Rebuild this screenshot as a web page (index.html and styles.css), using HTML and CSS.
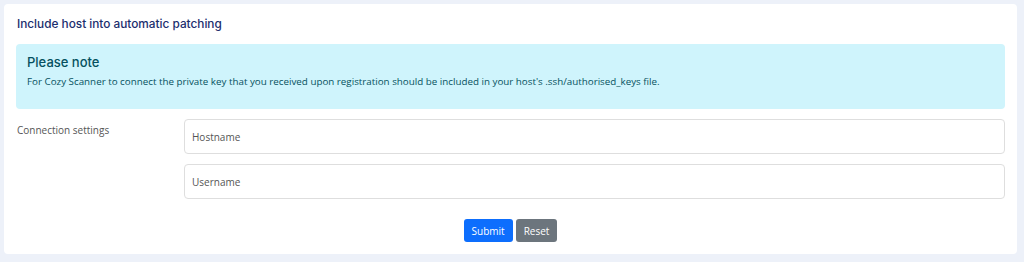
FILE: index.html
```html
<!DOCTYPE html>
<html lang="en">
<head>
  <meta charset="UTF-8" />
  <title>Include host into automatic patching</title>
  <link rel="stylesheet" href="styles.css">
</head>
<body>
  <div class="card">
    <h3 class="card-title">Include host into automatic patching</h3>

    <div class="alert">
      <h4>Please note</h4>
      <p>For Cozy Scanner to connect the private key that you received upon registration should be included in your host's .ssh/authorised_keys file.</p>
    </div>

    <form class="host-form">
      <div class="form-row">
        <label>Connection settings</label>
        <div class="inputs">
          <input type="text" placeholder="Hostname">
          <input type="text" placeholder="Username">
        </div>
      </div>

      <div class="actions">
        <button type="submit" class="btn btn-primary">Submit</button>
        <button type="reset" class="btn btn-secondary">Reset</button>
      </div>
    </form>
  </div>
</body>
</html>
```

FILE: styles.css
```css
* {
  box-sizing: border-box;
  margin: 0;
  padding: 0;
}

body {
  background: #edf1f9;
  font-family: 'Open Sans', 'Noto Sans', sans-serif;
  font-size: 10px;
  color: #555;
  padding: 4px 7px 0 4px;
}

.card {
  background: #ffffff;
  border-radius: 4px;
  padding: 13px 12px 12px 12px;
  height: 250px;
}

.card-title {
  font-family: 'Inter', sans-serif;
  font-size: 11.8px;
  line-height: 15px;
  font-weight: 500;
  color: #1b2e6e;
  margin-left: 1px;
  margin-bottom: 12px;
}

.alert {
  background: #cff4fc;
  color: #055160;
  border-radius: 4px;
  padding: 10px 11px 19px;
  margin-bottom: 10px;
}

.alert h4 {
  font-family: 'Inter', sans-serif;
  font-size: 13px;
  line-height: 16px;
  font-weight: 500;
  margin-bottom: 4px;
}

.alert p {
  font-size: 9.8px;
  line-height: 16px;
}

.form-row {
  display: flex;
}

.form-row label {
  width: 168px;
  line-height: 14px;
  padding: 4px 0 0 1px;
}

.inputs {
  flex: 1;
  display: flex;
  flex-direction: column;
  gap: 10px;
}

input {
  height: 35px;
  border: 1px solid #dedede;
  border-radius: 4px;
  padding: 0 7px;
  font-family: inherit;
  font-size: 10px;
}

input::placeholder {
  color: #555;
}

.actions {
  display: flex;
  justify-content: center;
  gap: 3px;
  margin-top: 20px;
}

.btn {
  height: 23px;
  padding: 0 8px;
  border: none;
  border-radius: 3px;
  color: #fff;
  font-family: inherit;
  font-size: 10px;
}

.btn-primary {
  background: #0d6efd;
}

.btn-secondary {
  background: #6c757d;
}
```
